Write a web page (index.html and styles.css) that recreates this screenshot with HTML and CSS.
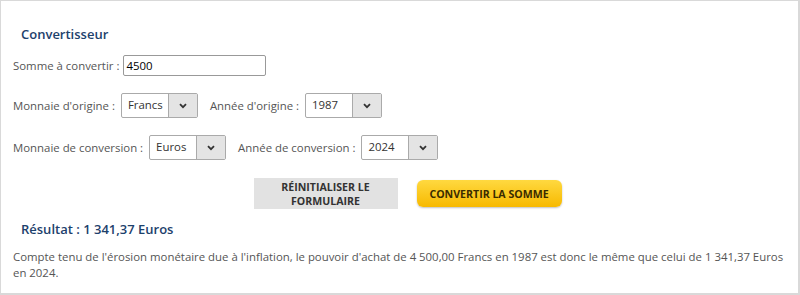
FILE: index.html
```html
<!DOCTYPE html>
<html lang="fr">

<head>
    <meta charset="UTF-8">
    <meta name="viewport" content="width=device-width, initial-scale=1.0">
    <title>Convertisseur</title>
    <link rel="stylesheet" href="styles.css">
</head>

<body>
    <div class="converter">
        <h2 class="title">Convertisseur</h2>

        <div class="row row-amount">
            <label for="amount">Somme à convertir :</label>
            <input id="amount" class="amount" type="text" value="4500">
        </div>

        <div class="row">
            <label>Monnaie d'origine :</label>
            <div class="dropdown">
                <span class="dropdown-value">Francs</span>
                <span class="dropdown-btn">
                    <svg width="8" height="6" viewBox="0 0 8 6"><path d="M1 1.2 L4 4.2 L7 1.2" fill="none" stroke="#333" stroke-width="1.8"/></svg>
                </span>
            </div>
            <label class="second">Année d'origine :</label>
            <div class="dropdown">
                <span class="dropdown-value">1987</span>
                <span class="dropdown-btn">
                    <svg width="8" height="6" viewBox="0 0 8 6"><path d="M1 1.2 L4 4.2 L7 1.2" fill="none" stroke="#333" stroke-width="1.8"/></svg>
                </span>
            </div>
        </div>

        <div class="row">
            <label>Monnaie de conversion :</label>
            <div class="dropdown">
                <span class="dropdown-value">Euros</span>
                <span class="dropdown-btn">
                    <svg width="8" height="6" viewBox="0 0 8 6"><path d="M1 1.2 L4 4.2 L7 1.2" fill="none" stroke="#333" stroke-width="1.8"/></svg>
                </span>
            </div>
            <label class="second">Année de conversion :</label>
            <div class="dropdown">
                <span class="dropdown-value">2024</span>
                <span class="dropdown-btn">
                    <svg width="8" height="6" viewBox="0 0 8 6"><path d="M1 1.2 L4 4.2 L7 1.2" fill="none" stroke="#333" stroke-width="1.8"/></svg>
                </span>
            </div>
        </div>

        <div class="actions">
            <button class="btn-reset">Réinitialiser le<br>formulaire</button>
            <button class="btn-convert">Convertir la somme</button>
        </div>

        <h2 class="title result">Résultat : 1 341,37 Euros</h2>
        <p class="result-text">Compte tenu de l'érosion monétaire due à l'inflation, le pouvoir d'achat de 4 500,00 Francs en 1987 est donc le même que celui de 1 341,37 Euros en 2024.</p>
    </div>
</body>

</html>
```

FILE: styles.css
```css
body {
    margin: 0;
    padding: 0;
    background: #fff;
    font-family: "Open Sans", Arial, sans-serif;
    font-size: 11.4px;
    color: #555;
}

.converter {
    box-sizing: border-box;
    width: 800px;
    height: 295px;
    border: 1px solid #d9d9d9;
    border-right-width: 2px;
    border-bottom-width: 2px;
    padding: 23px 12px 0 12px;
}

.title {
    margin: 0;
    padding-left: 8px;
    font-size: 13px;
    font-weight: 600;
    line-height: 20px;
    color: #1d416c;
}

.row {
    display: flex;
    align-items: center;
    height: 25px;
    margin-top: 17px;
}

.row-amount {
    height: 21px;
    margin-top: 11px;
}

.row label {
    margin-right: 6px;
}

.row-amount label {
    margin-right: 4px;
}

.row label.second {
    margin-left: 12px;
    margin-right: 6px;
}

.amount {
    box-sizing: border-box;
    width: 143px;
    height: 21px;
    border: 1px solid #999;
    border-radius: 2px;
    padding: 0 2px;
    font-family: "Open Sans", Arial, sans-serif;
    font-size: 11.4px;
    color: #000;
}

.dropdown {
    box-sizing: border-box;
    display: flex;
    width: 77px;
    height: 25px;
    border: 1px solid #aaa;
    border-radius: 2px;
    background: #fff;
}

.dropdown-value {
    flex: 1;
    padding-left: 6px;
    line-height: 21px;
    color: #333;
}

.dropdown-btn {
    display: flex;
    align-items: center;
    justify-content: center;
    width: 28px;
    background: #e4e4e4;
    border-left: 1px solid #aaa;
}

.actions {
    display: flex;
    align-items: center;
    justify-content: center;
    gap: 19px;
    margin-top: 18px;
    padding-left: 16px;
}

.actions button {
    font-family: "Open Sans", Arial, sans-serif;
    font-size: 10.6px;
    font-weight: 700;
    text-transform: uppercase;
    line-height: 14px;
    cursor: pointer;
}

.btn-reset {
    width: 144px;
    height: 31px;
    border: none;
    background: #e2e2e2;
    color: #333;
    padding: 0;
}

.btn-convert {
    width: 145px;
    height: 27px;
    border: none;
    border-radius: 6px;
    background: linear-gradient(#ffd940, #f7b900);
    box-shadow: 0 1px 2px rgba(0, 0, 0, 0.25);
    color: #3a2c00;
    padding: 0;
}

.result {
    margin-top: 10px;
}

.result-text {
    margin: 10px 0 0 0;
    line-height: 16px;
}
```
